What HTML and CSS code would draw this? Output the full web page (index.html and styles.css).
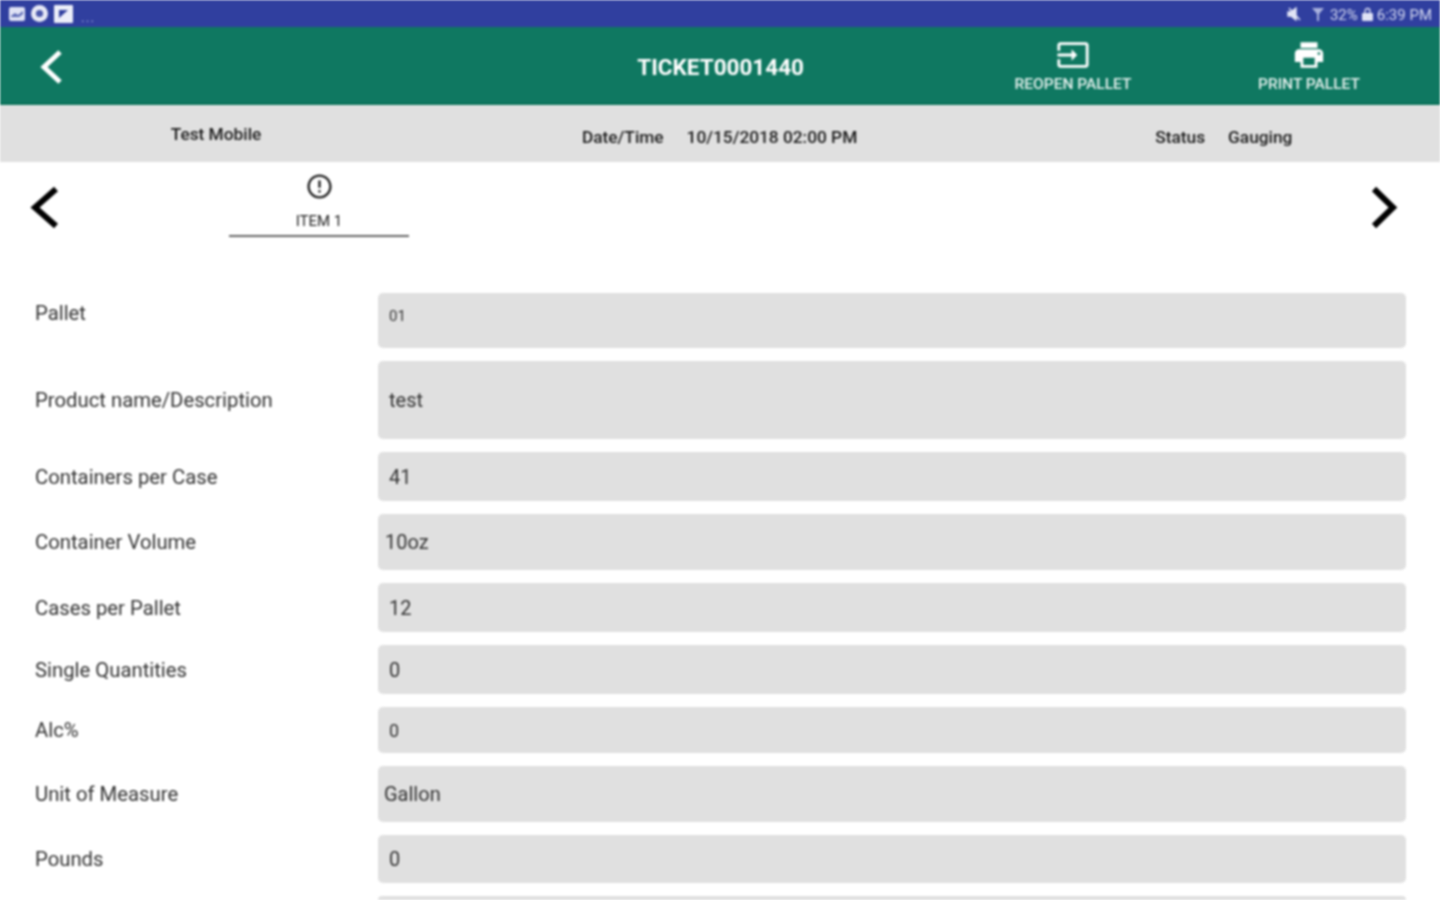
FILE: index.html
```html
<!DOCTYPE html>
<html lang="en">
<head>
    <meta charset="UTF-8">
    <meta name="viewport" content="width=device-width, initial-scale=1.0">
    <title>TICKET0001440</title>
    <link rel="stylesheet" href="styles.css">
</head>
<body>
    <div class="status-bar">
        <div class="status-left">
            <svg class="st-icon" width="16" height="16" viewBox="0 0 16 16"><rect x="0" y="1" width="16" height="14" rx="2" fill="#dfe2f5"/><path d="M2 10l4-3 3 2 5-4v3l-4 3H2z" fill="#5c69b5"/></svg>
            <svg class="st-icon" width="17" height="17" viewBox="0 0 17 17"><circle cx="8.500" cy="8.500" r="8.500" fill="#e8eaf6"/><circle cx="8.500" cy="8.500" r="3.600" fill="#4a57ab"/></svg>
            <svg class="st-icon" width="19" height="18" viewBox="0 0 19 18"><rect width="19" height="18" rx="1" fill="#eceef9"/><path d="M5 13V5h9z" fill="#303f9f"/></svg>
            <span class="st-more">...</span>
        </div>
        <div class="status-right">
            <svg class="st-mute" width="14" height="14" viewBox="0 0 14 14"><path d="M1 5h3l5-4v12L4 9H1z M2 1l11 12" fill="#e1e4f5" stroke="#e1e4f5" stroke-width="1.400"/></svg>
            <svg class="st-signal" width="12" height="14" viewBox="0 0 12 14"><path d="M0 1h12L7 7v7H5V7z" fill="#aab2de"/></svg>
            <span class="st-text">32%</span>
            <svg class="st-lock" width="11" height="14" viewBox="0 0 11 14"><path d="M3 6V4a2.500 2.500 0 0 1 5 0v2" fill="none" stroke="#dfe2f5" stroke-width="1.300"/><rect y="6" width="11" height="8" rx="1" fill="#dfe2f5"/></svg>
            <span class="st-text">6:39 PM</span>
        </div>
    </div>

    <header class="app-bar">
        <div class="app-left">
            <svg class="back" width="26" height="36" viewBox="0 0 26 36"><path d="M23 3L7 18l16 15" fill="none" stroke="#fff" stroke-width="5"/></svg>
        </div>
        <h1 class="title">TICKET0001440</h1>
        <div class="actions">
            <div class="action">
                <svg width="34" height="34" viewBox="0 0 24 24" fill="#fff"><path d="M21 3.010H3c-1.100 0-2 .9-2 2V9h2V4.990h18v14.030H3V15H1v4.010c0 1.100.9 1.980 2 1.980h18c1.100 0 2-.88 2-1.980v-14c0-1.100-.9-2-2-2zM11 16l4-4-4-4v3H1v2h10v3z"/></svg>
                <span>REOPEN PALLET</span>
            </div>
            <div class="action">
                <svg width="36" height="36" viewBox="0 0 24 24" fill="#fff"><path d="M19 8H5c-1.660 0-3 1.340-3 3v6h4v4h12v-4h4v-6c0-1.660-1.340-3-3-3zm-3 11H8v-5h8v5zm3-7c-.55 0-1-.45-1-1s.45-1 1-1 1 .45 1 1-.45 1-1 1zm-1-9H6v4h12V3z"/></svg>
                <span>PRINT PALLET</span>
            </div>
        </div>
    </header>

    <div class="info-bar">
        <div class="info-name">Test Mobile</div>
        <div class="info-pair info-date"><span>Date/Time</span><span>10/15/2018 02:00 PM</span></div>
        <div class="info-pair info-status"><span>Status</span><span>Gauging</span></div>
    </div>

    <div class="tabs">
        <svg class="arrow" width="36" height="48" viewBox="0 0 36 48"><path d="M29 5L8 23.500 29 42" fill="none" stroke="#000" stroke-width="6"/></svg>
        <div class="tab">
            <svg width="29" height="29" viewBox="0 0 24 24" fill="#222"><path d="M11 15h2v2h-2zm0-8h2v6h-2zm.99-5C6.470 2 2 6.480 2 12s4.470 10 9.990 10C17.520 22 22 17.520 22 12S17.520 2 11.990 2zM12 20c-4.420 0-8-3.580-8-8s3.580-8 8-8 8 3.580 8 8-3.580 8-8 8z"/></svg>
            <span>ITEM 1</span>
        </div>
        <svg class="arrow arrow-next" width="36" height="48" viewBox="0 0 36 48"><path d="M9 5l19 18.500L9 42" fill="none" stroke="#000" stroke-width="6"/></svg>
    </div>

    <div class="form">
        <div class="label label-top">Pallet</div>
        <div class="field field-top field-small">01</div>
        <div class="label">Product name/Description</div>
        <div class="field">test</div>
        <div class="label">Containers per Case</div>
        <div class="field">41</div>
        <div class="label">Container Volume</div>
        <div class="field field-tight">10oz</div>
        <div class="label">Cases per Pallet</div>
        <div class="field">12</div>
        <div class="label">Single Quantities</div>
        <div class="field">0</div>
        <div class="label">Alc%</div>
        <div class="field field-mid">0</div>
        <div class="label">Unit of Measure</div>
        <div class="field field-tighter">Gallon</div>
        <div class="label">Pounds</div>
        <div class="field">0</div>
        <div class="label"></div>
        <div class="field field-cut"></div>
    </div>
</body>
</html>
```

FILE: styles.css
```css
* {
    margin: 0;
    padding: 0;
    box-sizing: border-box;
}

html {
    background-color: #fff;
    overflow: hidden;
}

body {
    width: 1440px;
    height: 900px;
    font-family: Roboto, "Liberation Sans", sans-serif;
    color: #333;
    filter: blur(0.8px);
}

/* status bar */
.status-bar {
    height: 27px;
    background-color: #303f9f;
    /* shadows carry the colour past the window so the blur has no pale edge */
    box-shadow: -6px 0 0 #303f9f, 6px 0 0 #303f9f, 0 -6px 0 #303f9f, -6px -6px 0 #303f9f, 6px -6px 0 #303f9f;
    display: flex;
    justify-content: space-between;
    align-items: center;
    padding: 0 8px 0 9px;
}

.status-left,
.status-right {
    display: flex;
    align-items: center;
}

.status-left {
    gap: 6px;
}

.st-more {
    margin: 6px 0 0 2px;
    font-size: 14px;
    letter-spacing: 1px;
    color: #9aa3d8;
}

.status-right {
    color: #d5d9f0;
    font-size: 15px;
}

.st-text {
    padding-top: 2px;
}

.st-mute {
    margin-right: 11px;
}

.st-signal {
    margin-right: 6px;
}

.st-lock {
    margin: 0 4px;
}

/* green toolbar */
.app-bar {
    height: 78px;
    background-color: #0f7861;
    border-bottom: 2px solid #0a6f58;
    box-shadow: -6px 0 0 #0f7861, 6px 0 0 #0f7861;
    display: grid;
    grid-template-columns: 1fr auto 636px;
    align-items: center;
    color: #fff;
}

.app-left {
    padding: 4px 0 0 37px;
    display: flex;
}

.title {
    font-size: 22.5px;
    font-weight: 700;
    text-align: center;
    margin-top: 3px;
}

.actions {
    display: flex;
    padding: 0 13px 0 151px;
}

.action {
    width: 236px;
    display: flex;
    flex-direction: column;
    align-items: center;
    font-size: 15.5px;
    font-weight: 500;
    color: #e6f1ee;
}

.action svg {
    height: 34px;
}

.action span {
    margin-top: 3px;
}

/* info strip */
.info-bar {
    height: 57px;
    background-color: #e0e0e0;
    border-top: 1px solid #eceeed;
    box-shadow: -6px 0 0 #e0e0e0, 6px 0 0 #e0e0e0;
    display: flex;
    align-items: center;
    font-size: 17.3px;
    font-weight: 500;
    color: #1c1c1c;
}

.info-name {
    width: 432px;
    text-align: center;
    margin-top: -1px;
}

.info-pair {
    display: flex;
    gap: 23px;
    margin-top: 6px;
}

.info-date {
    margin-left: 150px;
}

.info-status {
    margin-left: 298px;
}

/* item tabs */
.tabs {
    height: 75px;
    display: flex;
    align-items: flex-start;
    padding: 22px 39px 0 27px;
}

.tab {
    width: 180px;
    height: 65px;
    margin: -12px 0 0 166px;
    display: flex;
    flex-direction: column;
    align-items: center;
    border-bottom: 2px solid #666;
    font-size: 15px;
    color: #222;
}

.tab span {
    margin-top: 11px;
}

.arrow-next {
    margin-left: auto;
}

/* form rows */
.form {
    margin: 56px 34px 0 35px;
    display: grid;
    grid-template-columns: 343px 1028px;
    grid-template-rows: 55px 78px 49px 56px 49px 49px 46px 56px 48px 4px;
    row-gap: 13px;
    font-size: 20.3px;
}

.label {
    display: flex;
    align-items: center;
}

.field {
    display: flex;
    align-items: center;
    padding-left: 11px;
    background-color: #e0e0e0;
    border-radius: 5px;
    font-size: 20px;
}

.label-top {
    align-items: flex-start;
    padding-top: 8px;
}

.field-top {
    padding-bottom: 10px;
}

.field-small {
    font-size: 15px;
}

.field-mid {
    font-size: 18px;
}

.field-tight {
    padding-left: 7px;
}

.field-tighter {
    padding-left: 6px;
}

.field-cut {
    border-radius: 5px 5px 0 0;
}
```
